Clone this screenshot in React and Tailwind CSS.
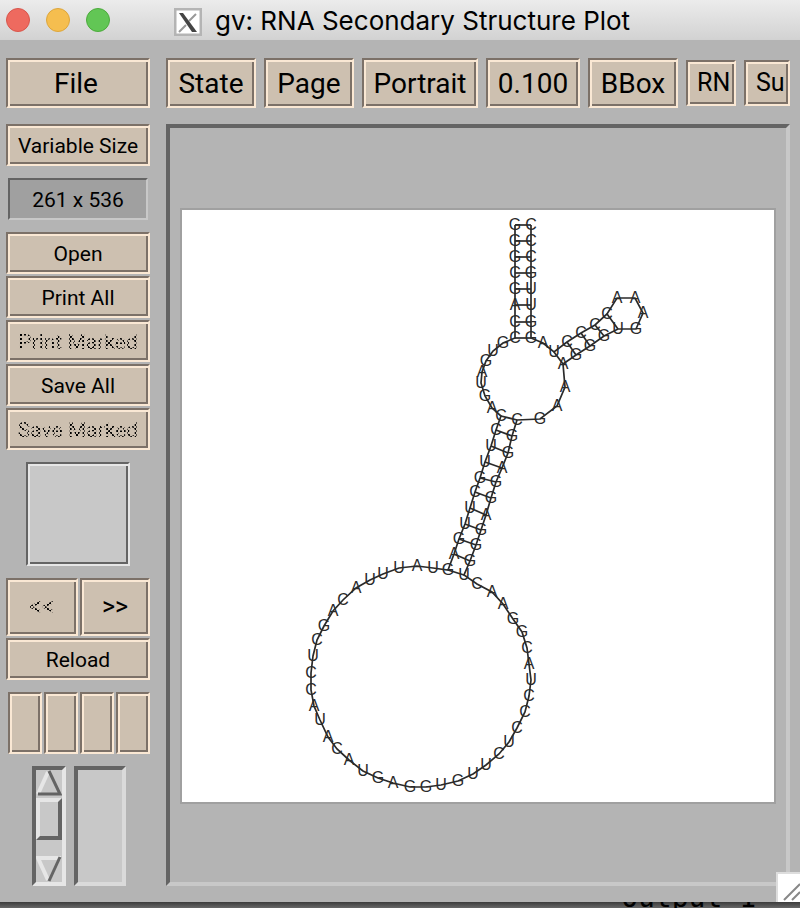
import React from "react";

const bevel =
  "border-2 border-t-[#7c7168] border-l-[#7c7168] border-r-[#fae8d4] border-b-[#fae8d4] bg-[#cdc0b0] shadow-[inset_2px_2px_0_#fae8d4,inset_-2px_-2px_0_#7c7168] overflow-hidden whitespace-nowrap text-black";

function BigButton({ children, className }) {
  return (
    <button type="button" className={`${bevel} h-[50px] shrink-0 pt-[2px] text-[28px] leading-8 ${className}`}>
      {children}
    </button>
  );
}

function SideButton({ children, disabled }) {
  return (
    <button type="button" disabled={disabled} className={`${bevel} h-[42px] w-full pt-[2px] text-[21px] font-normal leading-6`}>
      {disabled ? (
        <span className="bg-[conic-gradient(#000_25%,transparent_0_50%,#000_0_75%,transparent_0)] bg-[length:4px_4px] bg-clip-text text-transparent">
          {children}
        </span>
      ) : (
        children
      )}
    </button>
  );
}

// Each base in 5' to 3' order: [letter, x, y]
const bases = [
  ["G", 515, 225], ["G", 515, 241], ["G", 515, 257], ["C", 515, 273], ["G", 515, 289], ["A", 515, 305], ["C", 515, 322], ["C", 515, 338],
  ["G", 503, 343], ["U", 493, 351], ["G", 486, 361], ["A", 482, 372], ["U", 481, 383], ["G", 485, 396], ["A", 492, 408],
  ["C", 501, 416], ["C", 496, 430], ["U", 491, 446], ["U", 485, 462], ["G", 480, 478], ["C", 475, 492], ["U", 470, 508], ["U", 465, 524], ["G", 459, 539], ["A", 454, 554], ["G", 448, 570],
  ["U", 433, 568], ["A", 417, 566], ["U", 399, 568], ["U", 383, 574], ["U", 370, 580], ["A", 356, 588], ["C", 343, 600], ["A", 333, 611], ["G", 324, 626], ["C", 317, 640], ["U", 313, 656], ["C", 311, 673],
  ["C", 311, 690], ["A", 314, 706], ["U", 320, 720], ["A", 328, 737], ["C", 337, 749], ["A", 349, 760], ["U", 363, 771], ["G", 378, 778], ["A", 393, 783], ["G", 410, 787], ["G", 426, 787], ["U", 441, 785], ["G", 458, 781], ["U", 473, 774], ["U", 486, 765], ["C", 499, 754], ["U", 509, 742], ["C", 517, 728], ["C", 525, 712], ["C", 529, 696],
  ["U", 531, 680], ["A", 529, 664], ["C", 527, 648], ["G", 522, 632], ["G", 513, 619], ["A", 503, 604], ["A", 492, 592], ["C", 477, 584],
  ["U", 464, 575], ["G", 470, 561], ["G", 476, 545], ["G", 481, 530], ["A", 486, 515], ["G", 491, 498], ["G", 496, 482], ["A", 502, 468], ["G", 508, 453], ["G", 512, 436], ["C", 517, 420],
  ["G", 540, 419], ["A", 557, 406], ["A", 565, 387],
  ["A", 563, 364], ["G", 576, 355], ["G", 590, 346], ["G", 604, 336], ["U", 618, 329], ["G", 636, 329], ["A", 643, 313], ["A", 635, 298], ["A", 617, 298], ["C", 607, 314], ["C", 595, 325], ["C", 581, 333], ["C", 567, 342], ["U", 554, 352],
  ["A", 543, 343], ["G", 531, 338], ["G", 531, 322], ["U", 531, 305], ["U", 531, 289], ["G", 531, 273], ["C", 531, 257], ["C", 531, 241], ["C", 531, 225],
];

// Paired helices: first index of each strand and the number of pairs
const helices = [[0, 102, 8], [15, 76, 11], [80, 93, 5]];

function StructurePlot() {
  return (
    <svg viewBox="182 210 592 592" className="block w-full font-['Liberation_Sans',Arial,sans-serif]" role="img" aria-label="RNA Secondary Structure Plot">
      <polyline points={bases.map(([, x, y]) => `${x},${y}`).join(" ")} fill="none" stroke="#2a2a2a" strokeWidth="1.7" />
      {helices.flatMap(([a, b, n]) =>
        Array.from({ length: n }, (_, i) => {
          const [, x1, y1] = bases[a + i];
          const [, x2, y2] = bases[b - i];
          return <line key={`${a}-${i}`} x1={x1} y1={y1} x2={x2} y2={y2} stroke="#2a2a2a" strokeWidth="1.7" />;
        })
      )}
      <g fontSize="16" fill="#2a2a2a" textAnchor="middle">
        {bases.map(([letter, x, y], i) => (
          <text key={i} x={x} y={y + 5}>
            {letter}
          </text>
        ))}
      </g>
    </svg>
  );
}

function TitleBar() {
  return (
    <header className="flex h-10 items-center bg-linear-to-b from-[#ececec] to-[#d2d2d2] pl-[6px]">
      <div className="flex w-[168px] shrink-0 gap-4">
        <button type="button" aria-label="Close" className="size-6 rounded-full border border-[#d8564c] bg-[#ee6a5f]" />
        <button type="button" aria-label="Minimize" className="size-6 rounded-full border border-[#dda63c] bg-[#f5be4f]" />
        <button type="button" aria-label="Zoom" className="size-6 rounded-full border border-[#4cab3c] bg-[#62c655]" />
      </div>
      <svg viewBox="0 0 28 28" className="mt-1 size-7 shrink-0" aria-hidden="true">
        <rect x="1" y="1" width="26" height="26" fill="#fff" stroke="#b4b4b4" strokeWidth="3" />
        <path d="M22 6L15 13M12 17L5 24" stroke="#999" strokeWidth="2" />
        <path d="M5 5H9L23 24H18Z" fill="#444" />
      </svg>
      <h1 className="ml-[13px] whitespace-nowrap pt-[2px] font-[Inter,sans-serif] text-[26px] font-normal leading-8 text-black">
        gv: RNA Secondary Structure Plot
      </h1>
    </header>
  );
}

function Scrollbar() {
  return (
    <div role="scrollbar" aria-controls="plot" aria-valuenow={10} className="flex h-[120px] w-[34px] flex-col border-4 border-t-[#646464] border-l-[#646464] border-r-[#e6e6e6] border-b-[#e6e6e6] bg-[#c8c8c8]">
      <svg viewBox="0 0 26 28" className="h-7 w-full shrink-0" aria-hidden="true">
        <path d="M2 24L12 2" stroke="#e6e6e6" strokeWidth="4" />
        <path d="M13 1L24 24H2" fill="none" stroke="#646464" strokeWidth="3" />
      </svg>
      <div className="h-[42px] w-full shrink-0 border-4 border-t-[#e6e6e6] border-l-[#e6e6e6] border-r-[#646464] border-b-[#646464]" />
      <svg viewBox="0 0 26 28" className="mt-auto h-7 w-full shrink-0" aria-hidden="true">
        <path d="M25 4H2L12 26" fill="none" stroke="#e6e6e6" strokeWidth="4" />
        <path d="M24 3L13 27" stroke="#646464" strokeWidth="3" />
      </svg>
    </div>
  );
}

function Sidebar() {
  return (
    <aside className="flex w-36 shrink-0 flex-col">
      <BigButton className="w-full pr-1">File</BigButton>
      <div className="mt-4">
        <SideButton>Variable Size</SideButton>
      </div>
      <div className="mx-[2px] mt-3 flex h-[42px] items-center justify-center border-2 border-t-[#646464] border-l-[#646464] border-r-[#c8c8c8] border-b-[#c8c8c8] bg-[#a0a0a0] pt-[2px] text-[21px] font-normal leading-6">
        261 x 536
      </div>
      <div className="mt-3 flex flex-col gap-[2px]">
        <SideButton>Open</SideButton>
        <SideButton>Print All</SideButton>
        <SideButton disabled>Print Marked</SideButton>
        <SideButton>Save All</SideButton>
        <SideButton disabled>Save Marked</SideButton>
      </div>
      <div className="mx-5 mt-3 h-[104px] border-2 border-t-[#646464] border-l-[#646464] border-r-[#e6e6e6] border-b-[#e6e6e6] bg-[#c8c8c8] shadow-[inset_2px_2px_0_#e6e6e6,inset_-2px_-2px_0_#646464]" />
      <div className="mt-3 flex gap-[2px]">
        <button type="button" className={`${bevel} h-[58px] w-[72px] text-[25px] font-normal leading-6`}>
          <span className="bg-[conic-gradient(#000_25%,transparent_0_50%,#000_0_75%,transparent_0)] bg-[length:4px_4px] bg-clip-text text-transparent">&lt;&lt;</span>
        </button>
        <button type="button" className={`${bevel} h-[58px] flex-1 text-[25px] font-normal leading-6`}>&gt;&gt;</button>
      </div>
      <div className="mt-[2px]">
        <SideButton>Reload</SideButton>
      </div>
      <div className="mt-3 ml-[2px] flex gap-[2px]">
        <button type="button" aria-label="Mark odd pages" className={`${bevel} h-[62px] flex-1`} />
        <button type="button" aria-label="Mark even pages" className={`${bevel} h-[62px] flex-1`} />
        <button type="button" aria-label="Mark current page" className={`${bevel} h-[62px] flex-1`} />
        <button type="button" aria-label="Unmark pages" className={`${bevel} h-[62px] flex-1`} />
      </div>
      <div className="mt-3 flex justify-center gap-2 pl-[2px]">
        <Scrollbar />
        <div className="h-[120px] w-[52px] border-4 border-t-[#646464] border-l-[#646464] border-r-[#dadada] border-b-[#dadada] bg-[#c8c8c8]" />
      </div>
    </aside>
  );
}

export default function App() {
  return (
    <div className="font-[Roboto,sans-serif] text-black">
      <div className="relative bg-[#b4b4b4]">
        <TitleBar />
        <div className="flex gap-4 pt-[18px] pr-[10px] pb-4 pl-[6px]">
          <Sidebar />
          <main className="flex min-w-0 flex-1 flex-col gap-4">
            <nav className="flex items-center gap-2 overflow-hidden">
              <BigButton className="w-[90px]">State</BigButton>
              <BigButton className="w-[90px]">Page</BigButton>
              <BigButton className="w-[116px]">Portrait</BigButton>
              <BigButton className="w-[94px]">0.100</BigButton>
              <BigButton className="w-[90px]">BBox</BigButton>
              <button type="button" className={`${bevel} h-[46px] w-[50px] shrink-0 pl-[9px] text-left text-[25px] leading-8`}>RN</button>
              <button type="button" className={`${bevel} h-[46px] min-w-0 flex-1 pl-[10px] text-left text-[25px] leading-8`}>Su</button>
            </nav>
            <section id="plot" className="flex flex-1 items-center border-4 border-t-[#646464] border-l-[#646464] border-r-[#c8c8c8] border-b-[#c8c8c8] px-[10px] pt-[2px]">
              <div className="w-full border-2 border-[#a0a0a0] bg-white">
                <StructurePlot />
              </div>
            </section>
          </main>
        </div>
        <svg viewBox="0 0 24 30" className="absolute right-0 bottom-0 h-[30px] w-6" aria-hidden="true">
          <rect width="24" height="30" fill="#ddd" />
          <rect x="2" y="2" width="22" height="28" fill="#fff" />
          <path d="M8 28L24 12M16 28L24 20" stroke="#888" strokeWidth="2" />
        </svg>
      </div>
      <div className="flex h-[6px] items-end justify-end overflow-hidden bg-linear-to-b from-[#3c3c3c] to-[#686868] pr-11">
        <span className="whitespace-pre font-['DejaVu_Sans_Mono',monospace] text-[28px] leading-[20px]">Output 1</span>
      </div>
    </div>
  );
}
